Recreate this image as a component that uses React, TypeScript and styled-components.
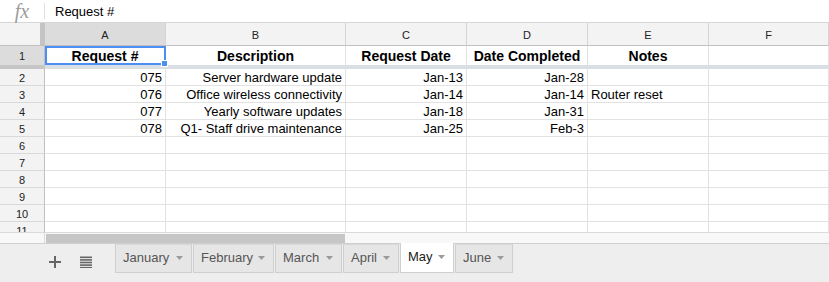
import React from 'react';
import styled, { createGlobalStyle } from 'styled-components';

const Global = createGlobalStyle`
  html, body { margin: 0; padding: 0; background: #ffffff; }
  body {
    font-family: "Liberation Sans", Arial, sans-serif;
    width: 829px;
    height: 282px;
    overflow: hidden;
  }
`;

const Page = styled.div`
  display: flex;
  flex-direction: column;
  width: 829px;
  height: 282px;
  overflow: hidden;
`;

const FormulaBar = styled.div`
  display: flex;
  align-items: center;
  height: 22px;
  border-bottom: 1px solid #d6d6d6;
  flex-shrink: 0;
`;

const FxLabel = styled.span`
  width: 44px;
  text-align: center;
  font-family: "Liberation Serif", "DejaVu Serif", serif;
  font-style: italic;
  font-size: 20px;
  color: #9c9c9c;
  line-height: 22px;
`;

const Divider = styled.span`
  width: 1px;
  height: 16px;
  background: #e0e0e0;
`;

const FormulaText = styled.span`
  margin-left: 10px;
  font-size: 13px;
  color: #000;
`;

const Grid = styled.div`
  height: 209px;
  overflow: hidden;
  flex-shrink: 0;
`;

const Row = styled.div<{ $h: number }>`
  display: flex;
  height: ${(p) => p.$h}px;
`;

const Corner = styled.div`
  flex: 0 0 45px;
  box-sizing: border-box;
  background: #f3f3f3;
  border-right: 5px solid #c4c4c4;
  border-bottom: 1px solid #c0c0c0;
`;

const ColHead = styled.div<{ $w?: number; $active?: boolean }>`
  flex: ${(p) => (p.$w ? `0 0 ${p.$w}px` : '1 1 auto')};
  box-sizing: border-box;
  display: flex;
  align-items: center;
  justify-content: center;
  padding-top: 1px;
  background: ${(p) => (p.$active ? '#dcdcdc' : '#f3f3f3')};
  border-right: 1px solid #d4d4d4;
  border-bottom: 1px solid #c0c0c0;
  font-size: 11px;
  color: #222;
`;

const RowHead = styled.div<{ $active?: boolean; $flat?: boolean }>`
  flex: 0 0 45px;
  box-sizing: border-box;
  display: flex;
  align-items: center;
  justify-content: center;
  padding-top: 1px;
  background: ${(p) => (p.$active ? '#dcdcdc' : '#f3f3f3')};
  border-right: 1px solid #c0c0c0;
  border-bottom: ${(p) => (p.$flat ? 'none' : '1px solid #d9d9d9')};
  font-size: 11px;
  color: #222;
`;

const Cell = styled.div<{ $w?: number; $align?: 'left' | 'right' | 'center'; $bold?: boolean; $flat?: boolean }>`
  position: relative;
  flex: ${(p) => (p.$w ? `0 0 ${p.$w}px` : '1 1 auto')};
  box-sizing: border-box;
  display: flex;
  align-items: center;
  justify-content: ${(p) =>
    p.$align === 'right' ? 'flex-end' : p.$align === 'center' ? 'center' : 'flex-start'};
  padding: 1px 3px 0 3px;
  border-right: 1px solid #e2e2e2;
  border-bottom: ${(p) => (p.$flat ? 'none' : '1px solid #e2e2e2')};
  font-size: ${(p) => (p.$bold ? '14px' : '13px')};
  font-weight: ${(p) => (p.$bold ? 700 : 400)};
  color: #000;
  white-space: nowrap;
  overflow: visible;
`;

const Selection = styled.div`
  position: absolute;
  top: 0;
  left: 0;
  right: -1px;
  bottom: 0;
  border: 2px solid #4d8ef5;
  pointer-events: none;
`;

const Handle = styled.div`
  position: absolute;
  right: -4px;
  bottom: -4px;
  width: 5px;
  height: 5px;
  background: #4d8ef5;
  border: 1px solid #ffffff;
`;

const FreezeHead = styled.div`
  flex: 0 0 45px;
  background: #c6c6c6;
`;

const FreezeBar = styled.div`
  flex: 1 1 auto;
  background: #dadee5;
`;

const ScrollRow = styled.div`
  display: flex;
  height: 11px;
  flex-shrink: 0;
  border-top: 1px solid #dadada;
  box-sizing: border-box;
`;

const ScrollHead = styled.div`
  flex: 0 0 45px;
  box-sizing: border-box;
  background: #f8f8f8;
  border-right: 1px solid #dadada;
`;

const ScrollTrack = styled.div`
  flex: 1 1 auto;
  background: #f8f8f8;
  padding: 1px 0 0 1px;
`;

const ScrollThumb = styled.div`
  width: 299px;
  height: 9px;
  background: #c6c6c6;
`;

const TabBar = styled.div`
  display: flex;
  align-items: flex-start;
  height: 39px;
  box-sizing: border-box;
  border-top: 1px solid #cfcfcf;
  background: #eeeeee;
  flex-shrink: 0;
`;

const IconButton = styled.div<{ $ml: number }>`
  width: 24px;
  height: 36px;
  margin-left: ${(p) => p.$ml}px;
  display: flex;
  align-items: center;
  justify-content: center;
  color: #666;
`;

const Tabs = styled.div`
  display: flex;
  gap: 1px;
  margin-left: 17px;
`;

const Tab = styled.div<{ $active?: boolean; $w: number }>`
  display: flex;
  align-items: center;
  justify-content: space-between;
  width: ${(p) => p.$w}px;
  box-sizing: border-box;
  height: ${(p) => (p.$active ? '30px' : '29px')};
  margin-top: ${(p) => (p.$active ? '-1px' : '0')};
  padding: 0 8px 2px 7px;
  background: ${(p) => (p.$active ? '#ffffff' : '#e6e6e6')};
  border: 1px solid #cfcfcf;
  border-top: ${(p) => (p.$active ? 'none' : '1px solid #d8d8d8')};
  font-size: 13px;
  color: ${(p) => (p.$active ? '#222' : '#555')};
  white-space: nowrap;
`;

const Caret = () => (
  <svg width="7" height="4" viewBox="0 0 7 4">
    <polygon points="0,0 7,0 3.5,4" fill="#9a9a9a" />
  </svg>
);

const PlusIcon = () => (
  <svg width="12" height="12" viewBox="0 0 12 12">
    <rect x="5" y="0" width="2" height="12" fill="#666" />
    <rect x="0" y="5" width="12" height="2" fill="#666" />
  </svg>
);

const ListIcon = () => (
  <svg width="12" height="12" viewBox="0 0 12 12">
    <rect x="0" y="0.5" width="12" height="1.6" fill="#666" />
    <rect x="0" y="3.1" width="12" height="1.6" fill="#666" />
    <rect x="0" y="5.7" width="12" height="1.6" fill="#666" />
    <rect x="0" y="8.3" width="12" height="1.6" fill="#666" />
    <rect x="0" y="10.9" width="12" height="1.1" fill="#666" />
  </svg>
);

const widths = [121, 180, 121, 121, 121];
const letters = ['A', 'B', 'C', 'D', 'E', 'F'];

const data: string[][] = [
  ['075', 'Server hardware update', 'Jan-13', 'Jan-28', ''],
  ['076', 'Office wireless connectivity', 'Jan-14', 'Jan-14', 'Router reset'],
  ['077', 'Yearly software updates', 'Jan-18', 'Jan-31', ''],
  ['078', 'Q1- Staff drive maintenance', 'Jan-25', 'Feb-3', ''],
];

const headers = ['Request #', 'Description', 'Request Date', 'Date Completed', 'Notes'];
const sheets: { name: string; w: number }[] = [
  { name: 'January', w: 77 },
  { name: 'February', w: 81 },
  { name: 'March', w: 67 },
  { name: 'April', w: 56 },
  { name: 'May', w: 54 },
  { name: 'June', w: 58 },
];

export default function App() {
  const rows: string[][] = [];
  for (let i = 0; i < 10; i++) rows.push(data[i] || ['', '', '', '', '']);

  return (
    <Page>
      <Global />
      <FormulaBar>
        <FxLabel>fx</FxLabel>
        <Divider />
        <FormulaText>Request #</FormulaText>
      </FormulaBar>

      <Grid>
        <Row $h={23}>
          <Corner />
          {letters.map((l, i) => (
            <ColHead key={l} $w={widths[i]} $active={i === 0}>
              {l}
            </ColHead>
          ))}
        </Row>

        <Row $h={19}>
          <RowHead $active $flat>
            1
          </RowHead>
          {headers.map((h, i) => (
            <Cell key={h} $w={widths[i]} $align="center" $bold $flat>
              {h}
              {i === 0 && (
                <Selection>
                  <Handle />
                </Selection>
              )}
            </Cell>
          ))}
          <Cell $flat />
        </Row>

        <Row $h={4}>
          <FreezeHead />
          <FreezeBar />
        </Row>

        {rows.map((r, ri) => (
          <Row $h={17} key={ri}>
            <RowHead>{ri + 2}</RowHead>
            {r.map((v, ci) => (
              <Cell key={ci} $w={widths[ci]} $align={ci === 4 ? 'left' : 'right'}>
                {v}
              </Cell>
            ))}
            <Cell />
          </Row>
        ))}
      </Grid>

      <ScrollRow>
        <ScrollHead />
        <ScrollTrack>
          <ScrollThumb />
        </ScrollTrack>
      </ScrollRow>

      <TabBar>
        <IconButton $ml={43}>
          <PlusIcon />
        </IconButton>
        <IconButton $ml={7}>
          <ListIcon />
        </IconButton>
        <Tabs>
          {sheets.map((s) => (
            <Tab key={s.name} $w={s.w} $active={s.name === 'May'}>
              {s.name}
              <Caret />
            </Tab>
          ))}
        </Tabs>
      </TabBar>
    </Page>
  );
}
